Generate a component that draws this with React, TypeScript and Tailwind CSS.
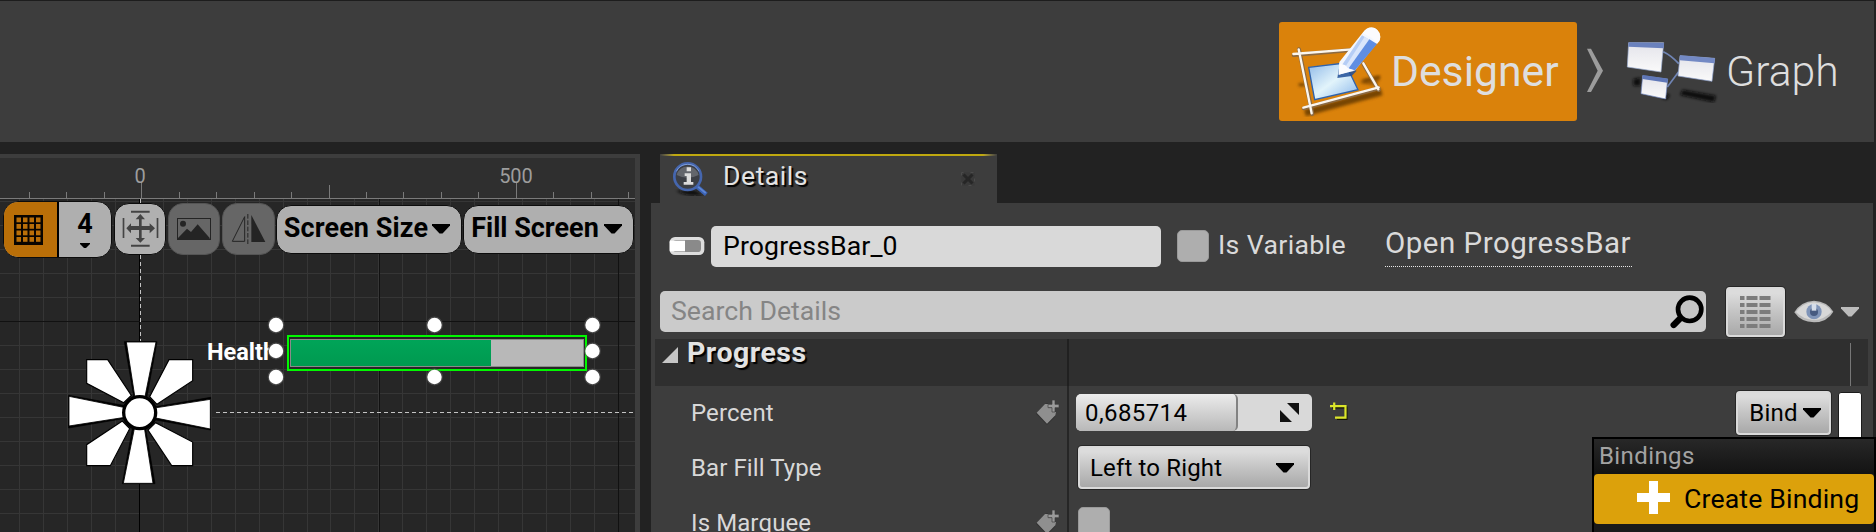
import React from "react";

const TICKS = [29, 66, 104, 179, 216, 254, 291, 366, 403, 441, 478, 553, 591, 628];
const GRID_V = Array.from({ length: 27 }, (_, i) => Math.round(19.5 + i * 23.95 - 0.4));
const GRID_H = Array.from({ length: 14 }, (_, i) => 3 + i * 24);

const HANDLES = [
  [276, 325], [434.5, 325], [592.5, 325],
  [276, 351], [592.5, 351],
  [276, 377], [434.5, 377], [592.5, 377],
];

function DesignerIcon() {
  return (
    <svg width="110" height="99" viewBox="0 2 330 297" className="shrink-0">
      <defs>
        <linearGradient id="sheet" x1="0" y1="0" x2="1" y2="1">
          <stop offset="0" stopColor="#8fb9e8" />
          <stop offset="0.5" stopColor="#e2f4fb" />
          <stop offset="1" stopColor="#86b4ea" />
        </linearGradient>
        <filter id="soft"><feGaussianBlur stdDeviation="4" /></filter>
        <filter id="edge"><feGaussianBlur stdDeviation="1.5" /></filter>
      </defs>
      <g stroke="#5d3500" opacity="0.8" filter="url(#soft)" fill="none">
        <path d="M75 275L305 212" strokeWidth="20" />
        <path d="M250 180L300 168M56 190H75" strokeWidth="9" />
      </g>
      <path d="M245 175L300 162L290 195L240 185Z" fill="#7a4500" opacity="0.6" filter="url(#soft)" />
      <g filter="url(#edge)">
        <g stroke="#8c6a42" strokeWidth="12" strokeLinecap="round">
          <path d="M41 101L215 86M57 84L97 278M71 261L296 201M250 128L296 206" />
        </g>
        <g stroke="#fbf6ee" strokeWidth="7" strokeLinecap="round">
          <path d="M40 98L215 84M56 84L95 276M70 259L296 198M250 126L295 204" />
        </g>
        <path d="M86 138L195 125L234 205L104 235Z" fill="url(#sheet)" stroke="#2f62ac" strokeWidth="4" />
        <path d="M178 135L172 170L215 164L230 148Z" fill="#1f4d96" opacity="0.85" />
        <path d="M248 34Q262 14 284 20Q304 32 300 54L224 148L176 160L178 122Z" fill="#f3f7fe" />
        <path d="M246 42L268 55L204 140L184 134Z" fill="#b5cdf5" />
        <path d="M254 46L276 60L210 142L196 136Z" fill="#d9e6fb" />
        <path d="M268 54L291 68L224 148L206 141Z" fill="#5f8ee2" />
        <path d="M178 126L196 132L206 142L222 146L176 160Z" fill="#fbfcff" />
        <path d="M248 36Q262 14 284 20Q306 32 299 58L291 68Q280 48 248 36Z" fill="#fbfbfd" />
      </g>
    </svg>
  );
}

function GraphIcon() {
  return (
    <svg width="92" height="62" viewBox="168 38 276 186" className="shrink-0">
      <defs>
        <linearGradient id="win" x1="0" y1="0" x2="0" y2="1">
          <stop offset="0" stopColor="#e3e3ea" />
          <stop offset="1" stopColor="#fafafa" />
        </linearGradient>
        <filter id="blur3"><feGaussianBlur stdDeviation="4" /></filter>
        <filter id="blur1"><feGaussianBlur stdDeviation="1.5" /></filter>
      </defs>
      <g fill="#0c0c0c" filter="url(#blur3)">
        <path d="M338 184L438 202L432 222L330 200Z" />
        <path d="M190 152L212 148V172H190Z" />
        <path d="M285 195L300 200L290 214L275 210Z" />
      </g>
      <g filter="url(#blur1)">
        <path d="M280 70Q305 82 326 106M326 130L292 176" stroke="#6f84b4" strokeWidth="5" fill="none" />
        <path d="M176 43L281 43L273 131L172 116Z" fill="url(#win)" stroke="#9fb0d6" strokeWidth="2" />
        <path d="M176 42L282 44L281 60L175 55Z" fill="#6b81bd" />
        <path d="M330 82L434 90L426 159L324 143Z" fill="url(#win)" stroke="#8fa3d0" strokeWidth="2" />
        <path d="M330 81L435 90L433 105L329 96Z" fill="#7389c4" />
        <path d="M218 142L293 152L287 212L213 196Z" fill="url(#win)" stroke="#6d84be" strokeWidth="2" />
        <path d="M218 140L294 151L292 163L217 152Z" fill="#5f77b8" />
      </g>
    </svg>
  );
}

function Caret({ className }: { className: string }) {
  return (
    <svg width="18" height="10" viewBox="0 0 18 10" className={className}>
      <path d="M0 0H18V1.5L10.5 9.5H7.5L0 1.5Z" fill="currentColor" />
    </svg>
  );
}

function TagIcon() {
  return (
    <svg width="24" height="25" viewBox="0 0 72 75" className="shrink-0">
      <path d="M0 41L30 10H36V34H46V46L58 48L54 54L33 75Z" fill="#2b2b2b" opacity="0.6" />
      <path d="M2 38L27 12L38 12V24H48V36H60L58 46L33 71Z" fill="#8f8f8f" />
      <path d="M48 0H57V13H69V23H57V36H48V23H36V13H48Z" fill="#9a9a9a" stroke="#3d3d3d" strokeWidth="2" />
    </svg>
  );
}

function TopBar() {
  return (
    <div className="h-[142px] border-t border-[#1d1d1d] pr-[2px] bg-[#222222] shrink-0">
      <div className="h-[141px] bg-[#3d3d3d] flex items-start justify-end pt-[21px] pr-[35px] text-[#dedede] text-[42.67px]">
        <div className="w-[298px] h-[99px] rounded-[3px] bg-[#da820b] flex items-center pl-px">
          <DesignerIcon />
          <span className="ml-px leading-none -mt-[1px] whitespace-nowrap">Designer</span>
        </div>
        <svg width="20" height="46" viewBox="0 0 60 138" className="ml-[8px] mt-[26px]">
          <path d="M6 2H18L54 68L18 132H6L38 68Z" fill="#9c9c9c" />
        </svg>
        <div className="h-[99px] flex items-center ml-[21px] w-[213px]">
          <GraphIcon />
          <span className="ml-[8px] leading-none font-light whitespace-nowrap">Graph</span>
        </div>
      </div>
    </div>
  );
}

function Ruler() {
  return (
    <svg width="635" height="41" viewBox="0 158 635 41" className="shrink-0 block">
      <rect x="0" y="158" width="635" height="41" fill="#2f2f2f" />
      <g fill="#7a7a7a">
        {TICKS.map((x) => <rect key={x} x={x} y="192" width="1" height="6" />)}
        <rect x="329" y="185" width="1" height="13" />
        <rect x="141" y="182" width="1" height="16" />
        <rect x="516" y="182" width="1" height="16" />
        <rect x="0" y="198" width="635" height="1" />
      </g>
      <g fill="#9d9d9d" fontSize="20" textAnchor="middle" fontFamily="Roboto, sans-serif">
        <text x="140" y="182.5">0</text>
        <text x="516" y="182.5">500</text>
      </g>
    </svg>
  );
}

function Grid() {
  return (
    <svg width="635" height="333" viewBox="0 0 635 333" className="block">
      <rect width="635" height="333" fill="#262626" />
      <g fill="#363636">
        {GRID_V.map((x) => <rect key={x} x={x} y="0" width="1" height="333" />)}
        {GRID_H.map((y) => <rect key={y} x="0" y={y - 1} width="635" height="1" />)}
      </g>
      <g fill="#111111">
        <rect x="139" y="0" width="1" height="333" fill="#000" />
        <rect x="379" y="0" width="1" height="333" />
        <rect x="618" y="0" width="1" height="333" />
        <rect x="0" y="122" width="635" height="1" />
      </g>
      <path d="M140.5 0V142" stroke="#c4c4c4" strokeDasharray="4 3" />
      <path d="M216 213.5H635" stroke="#c4c4c4" strokeDasharray="4 3" />
    </svg>
  );
}

function Flower() {
  return (
    <svg width="146" height="146" viewBox="202 210 438 438" className="absolute left-[67px] top-[141px]">
      <g fill="#fff" stroke="#000" strokeLinejoin="miter">
        {[0, 90, 180, 270].map((a) => (
          <path key={a} d="M374 215H472L440 390H404Z" fill="#000" strokeWidth="2" transform={`rotate(${a} 420 428)`} />
        ))}
        {[0, 90, 180, 270].map((a) => (
          <g key={a} transform={`rotate(${a} 420 428)`}>
            <path d="M508 269H579V332L472 403L450 380Z" strokeWidth="3.500" />
            <path d="M380 216H469L434 390H407Z" strokeWidth="2.500" />
          </g>
        ))}
        <circle cx="420" cy="428" r="48" strokeWidth="10" />
      </g>
    </svg>
  );
}

const pill = "rounded-[15px] border border-[#0c0c0c] flex items-center justify-center shrink-0";

function Toolbar() {
  return (
    <div className="absolute left-[3px] top-[2px] h-[56px] flex items-center text-black font-bold">
      <div className="h-[57px] w-[109px] flex rounded-[15px] border border-[#0c0c0c] overflow-hidden bg-[#afafaf] shrink-0">
        <div className="w-[55px] bg-[#ba6f08] border-r-2 border-black flex items-center justify-center">
          <svg width="29" height="30" viewBox="0 0 29 30" className="mr-[5px] mt-[2px]">
            <rect width="29" height="30" fill="#0a0500" />
            {[2.5, 9, 15.5, 22].map((y) =>
              [2.5, 9, 15.5, 22].map((x) => <rect key={`${x}-${y}`} x={x} y={y} width="4.5" height="4.8" fill="#ba6f08" />)
            )}
          </svg>
        </div>
        <div className="flex-1 flex flex-col items-center text-[27px] leading-none pt-[9px]">
          <span>4</span>
          <svg width="10" height="6" viewBox="0 0 10 6" className="mt-[5px]">
            <path d="M0 0H10V1L6 5H4L0 1Z" fill="#000" />
          </svg>
        </div>
      </div>
      <div className={`${pill} w-[52px] h-[52px] bg-[#b0b0b0] ml-[2px]`}>
        <svg width="38" height="38" viewBox="0 0 114 114">
          <g fill="#444">
            <path d="M30 2H86V8H30ZM30 104H86V110H30ZM5 24H10V84H5ZM107 24H112V84H107Z" />
            <path d="M58 12L72 28H62V48H86V40L102 55L86 70V60H62V84H72L58 98L44 84H54V60H30V70L16 55L30 40V48H54V28H44Z" />
          </g>
        </svg>
      </div>
      <div className={`${pill} w-[52px] h-[52px] bg-[#666666] border-[#555555] ml-[2px]`}>
        <svg width="34" height="22" viewBox="0 0 102 66">
          <rect x="1.5" y="1.5" width="99" height="63" fill="none" stroke="#242424" strokeWidth="3" />
          <circle cx="18" cy="17" r="9" fill="#242424" />
          <path d="M3 60L30 32L42 42L62 19L98 60V64H3Z" fill="#242424" />
        </svg>
      </div>
      <div className={`${pill} w-[53px] h-[52px] bg-[#666666] border-[#555555] ml-[2px]`}>
        <svg width="35" height="30" viewBox="0 0 105 90">
          <path d="M41 8V82H4Z" fill="none" stroke="#242424" strokeWidth="3" />
          <path d="M61 3V84H103Z" fill="#242424" />
          <path d="M50.500 0V90" stroke="#242424" strokeWidth="3" strokeDasharray="14 5" />
        </svg>
      </div>
      <div className={`${pill} w-[186px] h-[49px] bg-[#afafaf] ml-px pr-[4px] text-[27px] tracking-[0.1px]`}>
        <span className="whitespace-nowrap leading-none -mt-[2px]">Screen Size</span>
        <Caret className="ml-[4px]" />
      </div>
      <div className={`${pill} w-[171px] h-[49px] bg-[#afafaf] ml-px pr-[4px] text-[27px]`}>
        <span className="whitespace-nowrap leading-none -mt-[2px]">Fill Screen</span>
        <Caret className="ml-[5px]" />
      </div>
    </div>
  );
}

function DesignerCanvas() {
  return (
    <div className="w-[640px] h-[378px] bg-[#3d3d3d] pt-[4px] flex flex-col shrink-0">
      <Ruler />
      <div className="relative w-[635px] h-[333px] overflow-hidden">
        <Grid />
        <Toolbar />
        <Flower />
        <div className="absolute left-[207px] top-[139px] w-[62px] overflow-hidden text-white text-[23.5px] font-bold leading-[28px]">Health</div>
        <div className="absolute left-[287px] top-[136px] w-[300px] h-[36px] border-2 border-[#00f800] bg-[#262626] p-[2px] pl-px pr-[1px]">
          <div className="h-full bg-[#b8b8b8] border border-[#8a8a8a]">
            <div className="w-[200px] h-full bg-linear-to-b from-[#00a458] to-[#009a50]" />
          </div>
        </div>
        <svg width="635" height="333" viewBox="0 199 635 333" className="absolute left-0 top-0">
          {HANDLES.map(([x, y]) => (
            <g key={`${x}-${y}`}>
              <circle cx={x} cy={y} r="8.4" fill="#5a5a5a" opacity="0.6" />
              <circle cx={x} cy={y} r="7.2" fill="#fff" />
            </g>
          ))}
        </svg>
      </div>
    </div>
  );
}

function DetailsTab() {
  return (
    <div className="ml-[9px] w-[337px] h-[49px] bg-[#3d3d3d] relative flex items-center">
      <div className="absolute inset-x-0 top-0 h-[2px] flex">
        <div className="w-[14px] bg-linear-to-r from-[#3d3d3d] to-[#bfa80f]" />
        <div className="flex-1 bg-[#bfa80f]" />
        <div className="w-[14px] bg-linear-to-l from-[#3d3d3d] to-[#bfa80f]" />
      </div>
      <svg width="40" height="38" viewBox="0 0 120 114" className="ml-[11px] mt-[1px]">
        <defs><filter id="sh"><feGaussianBlur stdDeviation="4" /></filter></defs>
        <path d="M15 92Q50 112 100 104L70 90Z" fill="#101010" filter="url(#sh)" />
        <path d="M74 76L106 103" stroke="#3a62b4" strokeWidth="13" />
        <path d="M76 76L104 99" stroke="#5f87d4" strokeWidth="5" />
        <circle cx="50" cy="50" r="40" fill="#3c3f45" stroke="#4566ae" strokeWidth="8" />
        <path d="M16 34A38 38 0 0 1 84 34" stroke="#7d9cd8" strokeWidth="3" fill="none" />
        <path d="M17 45A34 34 0 0 1 83 45Q50 62 17 45Z" fill="#63666c" />
        <path d="M47 22H60V34H47ZM41 40H60V66H67V74H38V66H47V48H41Z" fill="#dcdcdc" />
      </svg>
      <span className="ml-[12px] text-[26.67px] leading-none -mt-[4px] text-[#e3e3e3] tracking-[0.5px] [text-shadow:2px_2px_1px_#000]">Details</span>
      <svg width="16" height="16" viewBox="0 0 16 16" className="absolute left-[300px] top-[17px]">
        <rect x="1.500" y="1.500" width="13" height="13" fill="#393939" stroke="#4b4b4b" strokeDasharray="3 7" strokeDashoffset="1" />
        <path d="M3.500 3.500L12.500 12.500M12.500 3.500L3.500 12.500" stroke="#262626" strokeWidth="3" />
      </svg>
    </div>
  );
}

const lightButton = "bg-linear-to-b from-[#dcdcdc] from-10% via-[#c4c4c4] to-[#a9a9a9] border-2 border-[#dadada] rounded-[4px] shadow-[0_0_0_1px_#262626]";

function NameRow() {
  return (
    <div className="flex items-start h-[88px] pt-[23px] pl-[18px] text-[26.67px] leading-none">
      <svg width="36" height="20" viewBox="0 0 108 60" className="mt-[10px] shrink-0">
        <rect x="2" y="3" width="104" height="54" rx="16" fill="#dddddd" />
        <rect x="12" y="12" width="84" height="36" rx="10" fill="#8a8a8a" />
        <rect x="2" y="14" width="46" height="32" fill="#fff" />
      </svg>
      <div className="ml-[6px] w-[450px] h-[41px] rounded-[5px] bg-[#d9d9d9] text-black flex items-center pl-[12px] tracking-[0.1px]">ProgressBar_0</div>
      <div className="ml-[16px] mt-[4px] w-[32px] h-[32px] rounded-[5px] bg-[#aeaeae] border border-[#9a9a9a]" />
      <span className="ml-[9px] mt-[6px] text-[#dadada] w-[128px] whitespace-nowrap tracking-[0.35px]">Is Variable</span>
      <span className="ml-[39px] h-[41px] pt-[3px] w-[247px] text-[#dadada] text-[29.5px] tracking-[0.5px] whitespace-nowrap border-b border-dotted border-[#e8e8e8]">Open ProgressBar</span>
    </div>
  );
}

function SearchRow() {
  return (
    <div className="flex items-center h-[41px] pl-[9px]">
      <div className="w-[1046px] h-[41px] rounded-[5px] bg-[#cbcbcb] flex items-center justify-between pl-[11px] pr-[2px] text-[26.67px] text-[#858585]">
        <span className="leading-none">Search Details</span>
        <svg width="35" height="34" viewBox="0 0 105 102">
          <circle cx="62" cy="43" r="35" fill="#c4c4c4" stroke="#000" strokeWidth="14" />
          <path d="M34 70L14 90" stroke="#000" strokeWidth="19" strokeLinecap="round" />
        </svg>
      </div>
      <div className={`${lightButton} ml-[20px] w-[59px] h-[50px] flex items-center justify-center shrink-0`}>
        <svg width="31" height="32" viewBox="0 0 31 32">
          {[0, 7, 14, 21, 28].map((y) => (
            <g key={y} fill="#7c7c7c">
              <rect x="0" y={y} width="4.5" height="4" />
              <rect x="6.500" y={y} width="11" height="4" />
              <rect x="19.500" y={y} width="11" height="4" />
            </g>
          ))}
        </svg>
      </div>
      <svg width="40" height="23" viewBox="0 0 120 69" className="ml-[9px] shrink-0">
        <path d="M1 37Q20 4 60 2Q100 4 118 35Q100 66 60 67Q20 66 1 37Z" fill="#b9b9b9" />
        <path d="M6 36Q25 9 60 7Q98 10 113 35Q90 59 60 60Q28 59 6 36Z" fill="#d8d8d8" />
        <circle cx="60" cy="35" r="23" fill="#7f94b8" />
        <circle cx="60" cy="36" r="12" fill="#465a80" />
        <path d="M53 12H67V32H53Z" fill="#d5dde9" />
      </svg>
      <Caret className="ml-[7px] text-[#bcbcbc] shrink-0" />
    </div>
  );
}

function PropertyRow({ label, tag, children }: { label: string; tag?: boolean; children: React.ReactNode }) {
  return (
    <div className="flex h-[55px] shrink-0">
      <div className="w-[412px] h-[53px] pl-[36px] pr-[7px] flex items-center justify-between text-[24px] text-[#d8d8d8] tracking-[0.1px]">
        <span className="leading-[28px]">{label}</span>
        {tag && <TagIcon />}
      </div>
      <div className="w-[2px] h-[55px] bg-[#262626]" />
      <div className="flex-1 h-[53px] flex items-center text-[24px] text-black">{children}</div>
    </div>
  );
}

function Properties() {
  return (
    <div className="mt-[7px] ml-[4px] w-[1213px] flex flex-col">
      <div className="flex h-[47px] bg-[#2f2f2f]">
        <div className="w-[412px] flex items-start pl-[7px]">
          <svg width="16" height="16" viewBox="0 0 16 16" className="mt-[8px]">
            <path d="M16 0V16H0Z" fill="#c6c6c6" />
          </svg>
          <span className="ml-[9px] text-[28.5px] leading-[28px] font-bold text-[#e3e3e3] tracking-[0.5px] [text-shadow:2px_2px_1px_#000]">Progress</span>
        </div>
        <div className="w-[2px] bg-[#202020]" />
        <div className="flex-1 flex justify-end pr-[17px] pt-[4px]"><div className="w-px h-[43px] bg-[#777777]" /></div>
      </div>
      <PropertyRow label="Percent" tag>
        <div className="ml-[7px] w-[236px] h-[37px] rounded-[5px] bg-[#d9d9d9] flex items-center justify-between overflow-hidden shrink-0">
          <div className="w-[162px] h-full rounded-[5px] bg-linear-to-b from-[#ececec] to-[#b8b8b8] border-r-2 border-[#828282] flex items-center pl-[9px] tracking-[0.4px]">0,685714</div>
          <svg width="19" height="19" viewBox="0 0 19 19" className="mr-[13px]">
            <path d="M7 0H19V12ZM0 7V19H12Z" fill="#111" />
          </svg>
        </div>
        <svg width="18" height="18" viewBox="0 0 18 18" className="ml-[18px] -mt-[3px] shrink-0">
          <path d="M2 5.500H16.500V17.500H7" stroke="#151500" strokeWidth="2" fill="none" />
          <path d="M0 4.200H15.500V15.700H5M4.200 0.500V8" stroke="#dbe62a" strokeWidth="2.200" fill="none" />
        </svg>
        <div className={`${lightButton} ml-[388px] w-[95px] h-[44px] flex items-center justify-center gap-[5px] pl-[3px] shrink-0`}>
          <span className="tracking-[0.2px]">Bind</span>
          <Caret className="" />
        </div>
        <div className="w-[24px] h-[60px] -mb-[18px] ml-[7px] bg-white border border-[#1c1c1c] rounded-[3px] shrink-0" />
      </PropertyRow>
      <PropertyRow label="Bar Fill Type">
        <div className={`${lightButton} ml-[9px] w-[232px] h-[43px] flex items-center justify-between pl-[10px] pr-[14px]`}>
          <span className="tracking-[0.15px]">Left to Right</span>
          <Caret className="" />
        </div>
      </PropertyRow>
      <PropertyRow label="Is Marquee" tag>
        <div className="ml-[9px] w-[32px] h-[32px] rounded-[5px] bg-[#aeaeae] border border-[#9a9a9a]" />
      </PropertyRow>
    </div>
  );
}

function BindingMenu() {
  return (
    <div className="absolute left-[1592px] top-[437px] w-[284px] h-[95px] border-2 border-b-0 border-black bg-[#1a1a1a] text-[24px]">
      <div className="h-[35px] bg-linear-to-b from-[#282828] to-[#131313] pl-[5px] pb-[2px] text-[#a3a3a3] flex items-center tracking-[0.4px]">Bindings</div>
      <div className="h-[50px] rounded-[4px] bg-[#dca10b] flex items-center pl-[43px] text-black text-[26.67px] tracking-[0.15px] whitespace-nowrap">
        <svg width="33" height="33" viewBox="0 0 33 33" className="mr-[14px] -mt-[3px] shrink-0">
          <path d="M12 0H21V12H33V21H21V33H12V21H0V12H12Z" fill="#fff" />
        </svg>
        Create Binding
      </div>
    </div>
  );
}

export default function App() {
  return (
    <div className="relative w-[1876px] h-[532px] overflow-hidden bg-[#222222] flex flex-col font-['Roboto',sans-serif]">
      <TopBar />
      <div className="flex pt-[12px] h-[390px]">
        <DesignerCanvas />
        <div className="ml-[11px] w-[1222px] flex flex-col">
          <DetailsTab />
          <div className="bg-[#3d3d3d] h-[329px] overflow-hidden">
            <NameRow />
            <SearchRow />
            <Properties />
          </div>
        </div>
      </div>
      <BindingMenu />
    </div>
  );
}
